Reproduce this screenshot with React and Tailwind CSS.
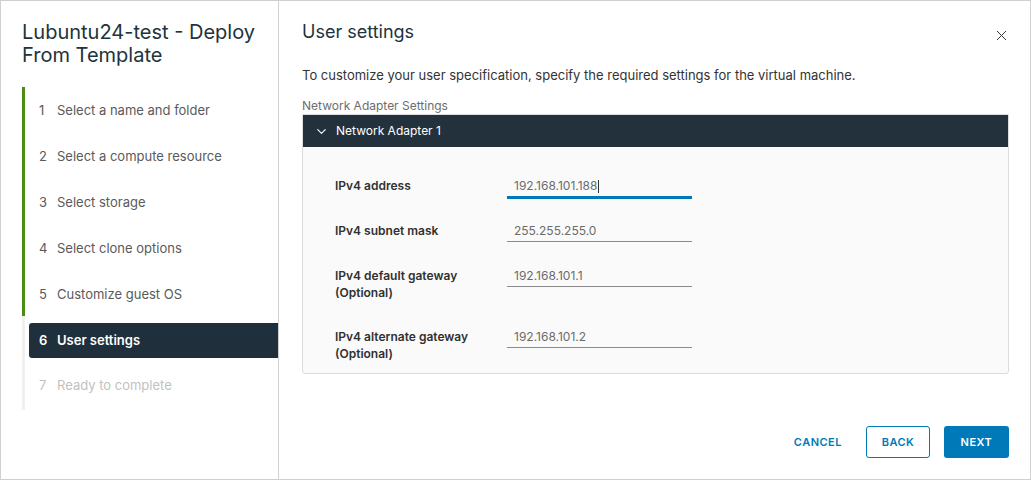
import { X, ChevronDown } from 'lucide-react'

const steps = [
  { n: 1, label: 'Select a name and folder', state: 'done' },
  { n: 2, label: 'Select a compute resource', state: 'done' },
  { n: 3, label: 'Select storage', state: 'done' },
  { n: 4, label: 'Select clone options', state: 'done' },
  { n: 5, label: 'Customize guest OS', state: 'done' },
  { n: 6, label: 'User settings', state: 'active' },
  { n: 7, label: 'Ready to complete', state: 'todo' },
]

const fields = [
  { label: ['IPv4 address'], value: '192.168.101.188', focused: true, gap: 'mt-0' },
  { label: ['IPv4 subnet mask'], value: '255.255.255.0', gap: 'mt-[23px]' },
  { label: ['IPv4 default gateway', '(Optional)'], value: '192.168.101.1', gap: 'mt-[23px]' },
  { label: ['IPv4 alternate gateway', '(Optional)'], value: '192.168.101.2', gap: 'mt-[27px]' },
]

function StepList() {
  return (
    <div className="mt-[20px] flex">
      <div className="flex flex-col w-[3px]">
        <div className="h-[229px] bg-[#4b8b14]" />
        <div className="h-[94px] bg-[#f0f0f0]" />
      </div>
      <ul className="flex-1 pt-[1px] pl-[4px]">
        {steps.map((s) => {
          if (s.state === 'active') {
            return (
              <li
                key={s.n}
                className="my-[5px] h-[35px] flex items-center pl-[10px] rounded-l-[3px] bg-[#1f2f3b] text-white font-semibold text-[13px]"
              >
                <span className="w-[18px]">{s.n}</span>
                <span>{s.label}</span>
              </li>
            )
          }
          return (
            <li
              key={s.n}
              className={`h-[46px] flex items-center pl-[10px] text-[13px] ${
                s.state === 'todo' ? 'text-[#c2c2c2]' : 'text-[#5a5a5a]'
              }`}
            >
              <span className="w-[18px]">{s.n}</span>
              <span>{s.label}</span>
            </li>
          )
        })}
      </ul>
    </div>
  )
}

function FieldRow({ field }) {
  return (
    <div className={`flex items-start ${field.gap}`}>
      <div className="w-[172px] text-[12px] font-semibold text-[#313131] leading-[17px]">
        {field.label.map((l) => (
          <div key={l}>{l}</div>
        ))}
      </div>
      <div className="w-[185px]">
        <div className="h-[17px] pl-[7px] text-[12px] text-[#6b6b6b] leading-[17px]">
          {field.value}
          {field.focused && <span className="inline-block w-px h-[13px] bg-[#333] align-middle ml-px" />}
        </div>
        {field.focused ? (
          <div className="mt-[2px] h-[3px] bg-[#0079b8]" />
        ) : (
          <div className="mt-[2px] mb-[2px] h-px bg-[#8c8c8c]" />
        )}
      </div>
    </div>
  )
}

export default function App() {
  return (
    <div
      className="w-[1031px] h-[480px] flex bg-white border border-[#d0d0d0] text-[#21333b]"
      style={{ fontFamily: 'Inter, "Noto Sans", sans-serif' }}
    >
      <aside className="w-[278px] border-r border-[#d0d0d0] pl-[21px] pt-[20px] shrink-0">
        <h1 className="text-[20px] leading-[23px] text-[#21333b] pr-2">Lubuntu24-test - Deploy From Template</h1>
        <StepList />
      </aside>

      <main className="flex-1 flex flex-col pl-[23px] pr-[21px]">
        <div className="flex items-start justify-between pt-[20px]">
          <h2 className="text-[18px] leading-[22px] text-[#21333b]">User settings</h2>
          <button className="mt-[6px] -mr-[1px] text-[#333]">
            <X size={17} strokeWidth={1.4} />
          </button>
        </div>

        <p className="mt-[22px] text-[13px] leading-[18px] text-[#333]">
          To customize your user specification, specify the required settings for the virtual machine.
        </p>
        <div className="mt-[14px] text-[12px] leading-[15px] text-[#6d6d6d]">Network Adapter Settings</div>

        <section className="mt-[1px] border border-[#dcdcdc] rounded-b-[3px] bg-[#fafafa]">
          <div className="h-[32px] bg-[#23313c] flex items-center pl-[11px] text-white text-[12px]">
            <ChevronDown size={15} strokeWidth={1.8} className="mr-[7px]" />
            <span>Network Adapter 1</span>
          </div>
          <div className="pl-[32px] pt-[30px] pb-[11px] flex flex-col">
            {fields.map((f) => (
              <FieldRow key={f.value} field={f} />
            ))}
          </div>
        </section>

        <div className="mt-auto mb-[21px] flex items-center justify-end gap-[14px]">
          <button className="px-[10px] h-[32px] text-[#0079b8] text-[11px] font-semibold tracking-[0.5px]">CANCEL</button>
          <button className="w-[64px] h-[32px] rounded-[3px] border border-[#0079b8] text-[#0079b8] text-[11px] font-semibold tracking-[0.5px]">
            BACK
          </button>
          <button className="w-[65px] h-[32px] rounded-[3px] bg-[#0079b8] text-white text-[11px] font-semibold tracking-[0.5px]">
            NEXT
          </button>
        </div>
      </main>
    </div>
  )
}
